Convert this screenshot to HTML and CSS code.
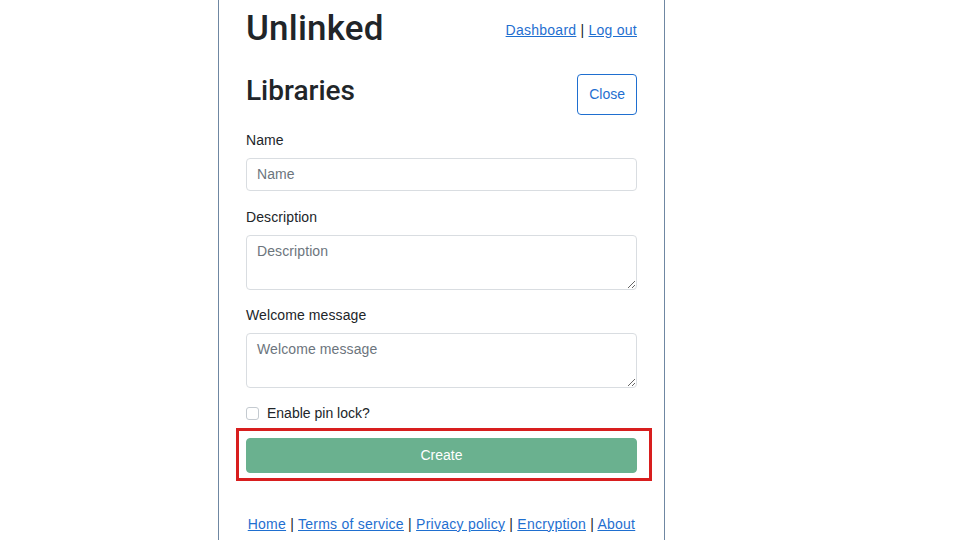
FILE: index.html
```html
<!DOCTYPE html>
<html lang="en">

<head>
  <meta charset="UTF-8">
  <meta name="viewport" content="width=device-width, initial-scale=1.0">
  <title>Unlinked - Libraries</title>

  <link rel="stylesheet" href="styles.css">
</head>

<body>
  <div class="page">
    <div class="top-bar">
      <h1 class="brand">Unlinked</h1>
      <div class="user-links">
        <a href="#">Dashboard</a> | <a href="#">Log out</a>
      </div>
    </div>

    <div class="section-head">
      <h2>Libraries</h2>
      <button type="button" class="btn-outline">Close</button>
    </div>

    <form id="formLibrary" action="" onsubmit="return false">
      <div class="field">
        <label for="name">Name</label>
        <input type="text" id="name" name="name" placeholder="Name">
      </div>
      <div class="field">
        <label for="description">Description</label>
        <textarea id="description" name="description" placeholder="Description"></textarea>
      </div>
      <div class="field">
        <label for="welcome">Welcome message</label>
        <textarea id="welcome" name="welcome" placeholder="Welcome message"></textarea>
      </div>
      <div class="check">
        <input type="checkbox" id="pinLock" name="pinLock">
        <label for="pinLock">Enable pin lock?</label>
      </div>
      <div class="highlight">
        <button type="submit" class="btn-create" disabled>Create</button>
      </div>
    </form>

    <footer class="footer">
      <a href="#">Home</a> | <a href="#">Terms of service</a> | <a href="#">Privacy policy</a> |
      <a href="#">Encryption</a> | <a href="#">About</a>
    </footer>
  </div>
</body>

</html>
```

FILE: styles.css
```css
* {
  padding: 0;
  margin: 0;
  box-sizing: border-box;
}

body {
  font-family: "Liberation Sans", Arial, sans-serif;
  font-size: 14px;
  line-height: 21px;
  color: #212529;
  background: #fff;
}

a {
  color: #1f6fd0;
}

.page {
  width: 447px;
  min-height: 540px;
  margin-left: 218px;
  padding: 8px 27px 0;
  border-left: 1px solid #6f87a2;
  border-right: 1px solid #6f87a2;
}

.top-bar {
  display: flex;
  justify-content: space-between;
  align-items: center;
}

.brand {
  font-family: Roboto, "Liberation Sans", sans-serif;
  font-size: 35px;
  line-height: 42px;
  font-weight: 500;
  letter-spacing: 0.2px;
}

.user-links {
  padding-top: 3px;
  letter-spacing: 0.25px;
}

.section-head {
  display: flex;
  justify-content: space-between;
  align-items: flex-start;
  margin-top: 24px;
  margin-bottom: 15px;
}

.section-head h2 {
  font-family: Roboto, "Liberation Sans", sans-serif;
  font-size: 28px;
  line-height: 34px;
  font-weight: 500;
}

.btn-outline {
  font-family: inherit;
  font-size: 14px;
  line-height: 21px;
  padding: 9px 11px;
  color: #1f6fd0;
  background: #fff;
  border: 1px solid #1f6fd0;
  border-radius: 4px;
}

.field {
  margin-bottom: 15.5px;
}

.field label {
  display: block;
  margin-bottom: 7px;
  letter-spacing: 0.1px;
}

.field input,
.field textarea {
  display: block;
  width: 100%;
  font-family: inherit;
  font-size: 14px;
  line-height: 21px;
  padding: 5px 10px;
  color: #212529;
  border: 1px solid #d9dde1;
  border-radius: 4px;
  letter-spacing: 0.1px;
}

.field textarea {
  height: 55px;
  resize: vertical;
}

.field input::placeholder,
.field textarea::placeholder {
  color: #6c757d;
}

.check {
  display: flex;
  align-items: center;
  gap: 8px;
  margin-top: -1px;
}

.check input {
  appearance: none;
  width: 13px;
  height: 13px;
  background: #fff;
  border: 1px solid #c4cad0;
  border-radius: 3px;
}

.highlight {
  margin: 4px -15px 0 -10px;
  padding: 7px 12px 5px 7px;
  border: 3px solid #d81e1e;
}

.btn-create {
  display: block;
  width: 100%;
  font-family: inherit;
  font-size: 14px;
  line-height: 21px;
  padding: 6px;
  color: #fff;
  background: #6ab18f;
  border: 1px solid #6ab18f;
  border-radius: 4px;
}

.footer {
  margin-top: 33px;
  text-align: center;
  letter-spacing: 0.25px;
}
```
